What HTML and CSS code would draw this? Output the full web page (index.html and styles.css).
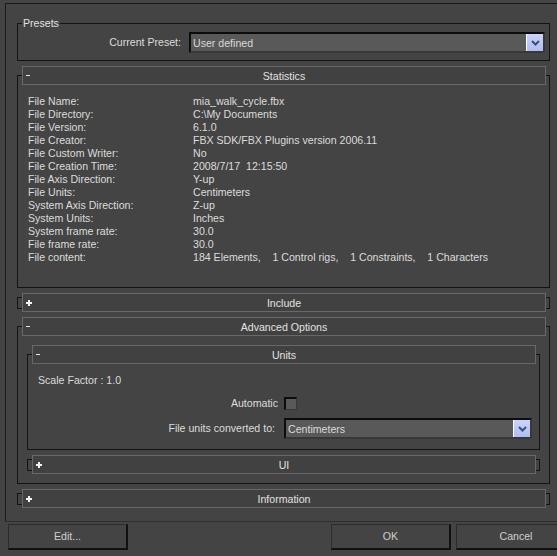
FILE: index.html
```html
<!DOCTYPE html>
<html>
<head>
<meta charset="utf-8">
<link rel="stylesheet" href="styles.css">
</head>
<body>
<div class="window">
  <div class="outer">
    <div class="presets">
      <span class="legend">Presets</span>
      <div class="preset-row">
        <span class="preset-label">Current Preset:</span>
        <div class="combo combo-wide">
          <span class="combo-text">User defined</span>
          <span class="drop"><svg width="9" height="6" viewBox="0 0 9 6"><polyline points="1,1 4.5,4.5 8,1" fill="none" stroke="#3d4d74" stroke-width="2"/></svg></span>
        </div>
      </div>
    </div>

    <div class="rollout">
      <div class="rh"><span class="sign"><svg width="5" height="3" viewBox="0 0 5 3"><rect x="0" y="1" width="4" height="1" fill="#e8e8e8"/></svg></span><span class="title">Statistics</span><span></span></div>
      <div class="rb stats">
        <span>File Name:</span><span>mia_walk_cycle.fbx</span>
        <span>File Directory:</span><span>C:\My Documents</span>
        <span>File Version:</span><span>6.1.0</span>
        <span>File Creator:</span><span>FBX SDK/FBX Plugins version 2006.11</span>
        <span>File Custom Writer:</span><span>No</span>
        <span>File Creation Time:</span><span>2008/7/17&nbsp; 12:15:50</span>
        <span>File Axis Direction:</span><span>Y-up</span>
        <span>File Units:</span><span>Centimeters</span>
        <span>System Axis Direction:</span><span>Z-up</span>
        <span>System Units:</span><span>Inches</span>
        <span>System frame rate:</span><span>30.0</span>
        <span>File frame rate:</span><span>30.0</span>
        <span>File content:</span><span>184 Elements,&nbsp;&nbsp;&nbsp; 1 Control rigs,&nbsp;&nbsp;&nbsp; 1 Constraints,&nbsp;&nbsp;&nbsp; 1 Characters</span>
      </div>
    </div>

    <div class="rollout collapsed">
      <div class="rh"><span class="sign"><svg width="6" height="6" viewBox="0 0 6 6"><rect x="0" y="2" width="6" height="2" fill="#f4f4f4"/><rect x="2" y="0" width="2" height="6" fill="#f4f4f4"/></svg></span><span class="title">Include</span><span></span></div>
      <div class="rb"></div>
    </div>

    <div class="rollout">
      <div class="rh"><span class="sign"><svg width="5" height="3" viewBox="0 0 5 3"><rect x="0" y="1" width="4" height="1" fill="#e8e8e8"/></svg></span><span class="title">Advanced Options</span><span></span></div>
      <div class="rb advanced">
        <div class="rollout inner">
          <div class="rh"><span class="sign"><svg width="5" height="3" viewBox="0 0 5 3"><rect x="0" y="1" width="4" height="1" fill="#e8e8e8"/></svg></span><span class="title">Units</span><span></span></div>
          <div class="rb units">
            <div class="scale">Scale Factor : 1.0</div>
            <div class="opt-row auto-row">
              <span class="opt-label lbl-auto">Automatic</span>
              <span class="checkbox"></span>
            </div>
            <div class="opt-row conv-row">
              <span class="opt-label lbl-conv">File units converted to:</span>
              <div class="combo combo-small">
                <span class="combo-text">Centimeters</span>
                <span class="drop"><svg width="9" height="6" viewBox="0 0 9 6"><polyline points="1,1 4.5,4.5 8,1" fill="none" stroke="#3d4d74" stroke-width="2"/></svg></span>
              </div>
            </div>
          </div>
        </div>
        <div class="rollout inner collapsed">
          <div class="rh"><span class="sign"><svg width="6" height="6" viewBox="0 0 6 6"><rect x="0" y="2" width="6" height="2" fill="#f4f4f4"/><rect x="2" y="0" width="2" height="6" fill="#f4f4f4"/></svg></span><span class="title">UI</span><span></span></div>
          <div class="rb"></div>
        </div>
      </div>
    </div>

    <div class="rollout collapsed">
      <div class="rh"><span class="sign"><svg width="6" height="6" viewBox="0 0 6 6"><rect x="0" y="2" width="6" height="2" fill="#f4f4f4"/><rect x="2" y="0" width="2" height="6" fill="#f4f4f4"/></svg></span><span class="title">Information</span><span></span></div>
      <div class="rb"></div>
    </div>
  </div>

  <div class="buttons">
    <div class="btn btn-edit">Edit...</div>
    <div class="btn btn-ok">OK</div>
    <div class="btn btn-cancel">Cancel</div>
  </div>
</div>
</body>
</html>
```

FILE: styles.css
```css
html, body {
  margin: 0;
  padding: 0;
  overflow: hidden;
  background: #444444;
}
body {
  font-family: "Liberation Sans", Arial, sans-serif;
  font-size: 10.6px;
  line-height: 13px;
  color: #dcdcdc;
}
.window {
  width: 557px;
  padding-top: 3px;
}
.outer {
  box-sizing: border-box;
  margin-left: 5px;
  width: 552px;
  height: 519px;
  border-top: 1px solid #1b1b1b;
  border-left: 1px solid #1b1b1b;
  border-bottom: 1px solid #303030;
  padding-top: 19px;
  padding-left: 11px;
}
.presets {
  position: relative;
  box-sizing: border-box;
  width: 533px;
  height: 38px;
  border: 1px solid #141414;
  padding: 8px 4px 7px 0;
}
.legend {
  position: absolute;
  top: -7px;
  left: 4px;
  padding: 0 1px;
  background: #444444;
  color: #e2e2e2;
}
.preset-row {
  display: flex;
  justify-content: flex-end;
  align-items: center;
}
.preset-label {
  margin-right: 8px;
}
.combo {
  box-sizing: border-box;
  height: 21px;
  border-style: solid;
  border-width: 2px;
  border-color: #0c0c0c #383838 #383838 #0c0c0c;
  background: #595959;
  display: flex;
  align-items: center;
  justify-content: space-between;
  color: #dadada;
}
.combo-wide { width: 356px; }
.combo-small { width: 248px; }
.combo-text {
  padding-left: 2px;
  padding-top: 1px;
}
.drop {
  box-sizing: border-box;
  width: 17px;
  height: 17px;
  border-left: 1px solid #ffffff;
  background: linear-gradient(#c9d5fb, #aebef2);
  display: flex;
  align-items: center;
  justify-content: center;
}
.drop svg { display: block; margin-left: 1px; }

.rollout {
  margin-top: 5px;
  width: 533px;
}
.rollout.collapsed {
  padding-bottom: 3px;
}
.rh {
  position: relative;
  box-sizing: border-box;
  height: 19px;
  margin: 0 4px 0 5px;
  border: 1px solid #686868;
  background: #414141;
  display: grid;
  grid-template-columns: 20px 1fr 20px;
  align-items: center;
  line-height: 17px;
  color: #e2e2e2;
}
.sign {
  padding-left: 3px;
  display: flex;
  align-items: center;
}
.sign svg { display: block; }
.title {
  text-align: center;
  padding-top: 1px;
  line-height: 16px;
}
.rb {
  box-sizing: border-box;
  margin-top: -10px;
  border: 1px solid #141414;
}
.collapsed .rb {
  margin-top: -15px;
  height: 12px;
}
.stats {
  padding: 19px 0 23px 10px;
  display: grid;
  grid-template-columns: 165px auto;
}
.advanced {
  padding: 13px 9px 9px 9px;
}
.rollout.inner {
  width: auto;
}
.units {
  padding: 19px 7px 10px 10px;
}
.scale {
  height: 13px;
}
.opt-row {
  display: grid;
  grid-template-columns: 246px auto;
  align-items: center;
}
.auto-row { margin-top: 10px; }
.conv-row { margin-top: 8px; }
.opt-label { text-align: right; }
.lbl-auto { padding-right: 6px; }
.lbl-conv { padding-right: 9px; }
.checkbox {
  box-sizing: border-box;
  width: 13px;
  height: 13px;
  border-style: solid;
  border-width: 2px 1px 1px 2px;
  border-color: #0c0c0c #383838 #383838 #0c0c0c;
  background: #595959;
}
.buttons {
  display: flex;
  margin-top: 2px;
  padding-left: 8px;
}
.btn {
  box-sizing: border-box;
  width: 120px;
  height: 26px;
  border-style: solid;
  border-width: 1px 2px 2px 1px;
  border-color: #2c2c2c #111111 #111111 #2c2c2c;
  display: flex;
  align-items: center;
  justify-content: center;
  color: #cfcfcf;
  flex: none;
}
.btn-ok { margin-left: 203px; }
.btn-cancel {
  margin-left: 5px;
  width: 101px;
  border-right: none;
  padding-left: 18px;
}
```
